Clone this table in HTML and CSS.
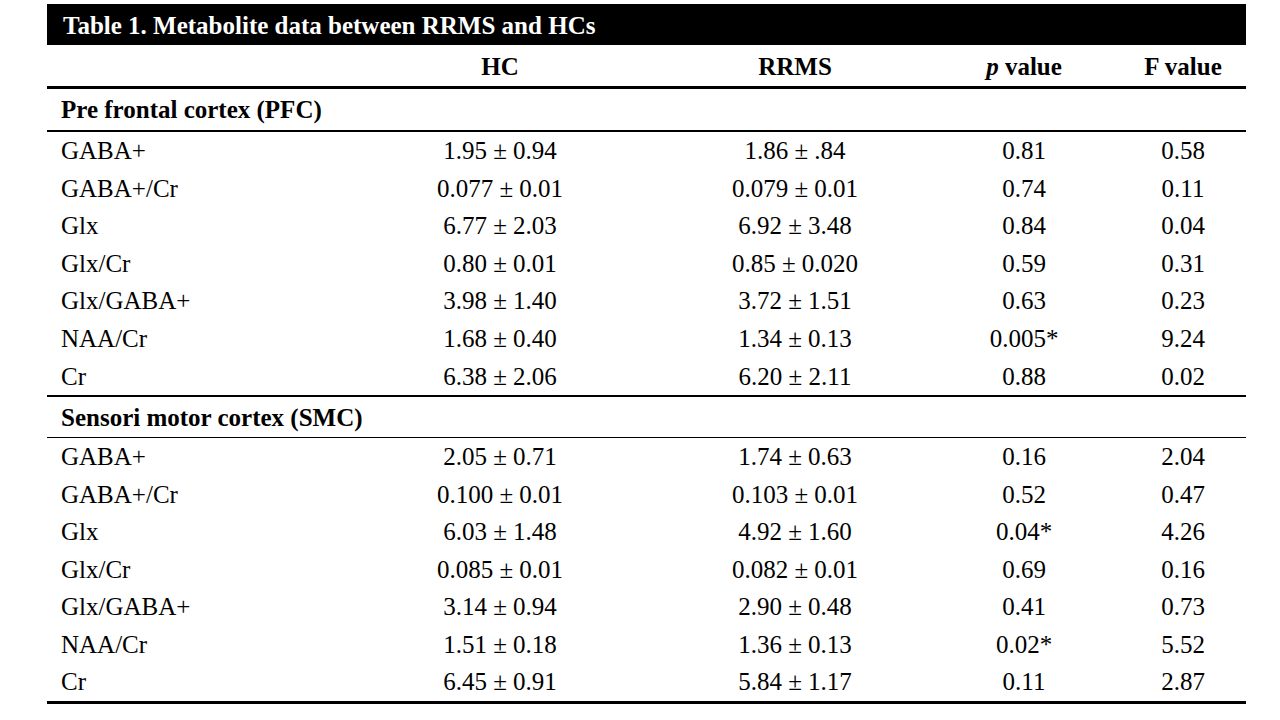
FILE: index.html
```html
<!DOCTYPE html>
<html>
<head>
<meta charset="utf-8">
<link rel="stylesheet" href="styles.css">
</head>
<body>
<div class="table">
  <div class="title">Table 1. Metabolite data between RRMS and HCs</div>
  <div class="row head">
    <div class="c label"></div>
    <div class="c">HC</div>
    <div class="c">RRMS</div>
    <div class="c"><i>p</i> value</div>
    <div class="c">F value</div>
  </div>
  <div class="section thick">Pre frontal cortex (PFC)</div>
  <div class="row"><div class="c label">GABA+</div><div class="c">1.95 ± 0.94</div><div class="c">1.86 ± .84</div><div class="c">0.81</div><div class="c">0.58</div></div>
  <div class="row"><div class="c label">GABA+/Cr</div><div class="c">0.077 ± 0.01</div><div class="c">0.079 ± 0.01</div><div class="c">0.74</div><div class="c">0.11</div></div>
  <div class="row"><div class="c label">Glx</div><div class="c">6.77 ± 2.03</div><div class="c">6.92 ± 3.48</div><div class="c">0.84</div><div class="c">0.04</div></div>
  <div class="row"><div class="c label">Glx/Cr</div><div class="c">0.80 ± 0.01</div><div class="c">0.85 ± 0.020</div><div class="c">0.59</div><div class="c">0.31</div></div>
  <div class="row"><div class="c label">Glx/GABA+</div><div class="c">3.98 ± 1.40</div><div class="c">3.72 ± 1.51</div><div class="c">0.63</div><div class="c">0.23</div></div>
  <div class="row"><div class="c label">NAA/Cr</div><div class="c">1.68 ± 0.40</div><div class="c">1.34 ± 0.13</div><div class="c">0.005*</div><div class="c">9.24</div></div>
  <div class="row last"><div class="c label">Cr</div><div class="c">6.38 ± 2.06</div><div class="c">6.20 ± 2.11</div><div class="c">0.88</div><div class="c">0.02</div></div>
  <div class="section thin">Sensori motor cortex (SMC)</div>
  <div class="row"><div class="c label">GABA+</div><div class="c">2.05 ± 0.71</div><div class="c">1.74 ± 0.63</div><div class="c">0.16</div><div class="c">2.04</div></div>
  <div class="row"><div class="c label">GABA+/Cr</div><div class="c">0.100 ± 0.01</div><div class="c">0.103 ± 0.01</div><div class="c">0.52</div><div class="c">0.47</div></div>
  <div class="row"><div class="c label">Glx</div><div class="c">6.03 ± 1.48</div><div class="c">4.92 ± 1.60</div><div class="c">0.04*</div><div class="c">4.26</div></div>
  <div class="row"><div class="c label">Glx/Cr</div><div class="c">0.085 ± 0.01</div><div class="c">0.082 ± 0.01</div><div class="c">0.69</div><div class="c">0.16</div></div>
  <div class="row"><div class="c label">Glx/GABA+</div><div class="c">3.14 ± 0.94</div><div class="c">2.90 ± 0.48</div><div class="c">0.41</div><div class="c">0.73</div></div>
  <div class="row"><div class="c label">NAA/Cr</div><div class="c">1.51 ± 0.18</div><div class="c">1.36 ± 0.13</div><div class="c">0.02*</div><div class="c">5.52</div></div>
  <div class="row end"><div class="c label">Cr</div><div class="c">6.45 ± 0.91</div><div class="c">5.84 ± 1.17</div><div class="c">0.11</div><div class="c">2.87</div></div>
</div>
</body>
</html>
```
FILE: styles.css
```css
html, body {
  margin: 0;
  padding: 0;
  background: #fff;
}
body {
  padding: 4px 0 0 47px;
  font-family: "Liberation Serif", "Times New Roman", serif;
  color: #000;
}
.table {
  width: 1199px;
}
.title {
  background: #000;
  color: #fff;
  font-weight: bold;
  font-size: 25px;
  height: 41px;
  line-height: 43px;
  padding-left: 16px;
  white-space: nowrap;
  overflow: hidden;
}
.row {
  display: grid;
  grid-template-columns: 291px 324px 266px 192px 126px;
  height: 37.5px;
  align-items: center;
  font-size: 25px;
  padding-top: 1px;
  box-sizing: border-box;
}
.c {
  text-align: center;
  white-space: nowrap;
}
.c.label {
  text-align: left;
  padding-left: 14px;
}
.row.head {
  height: 44px;
  font-weight: bold;
  border-bottom: 3px solid #000;
  padding-top: 3px;
}
.section {
  font-weight: bold;
  font-size: 25px;
  padding-left: 14px;
  display: flex;
  align-items: center;
  box-sizing: border-box;
  padding-top: 1px;
}
.section.thick {
  height: 43px;
  border-bottom: 2px solid #000;
}
.section.thin {
  height: 41px;
  border-bottom: 1px solid #000;
}
.row.last {
  border-bottom: 2px solid #000;
  height: 40px;
}
.row.end {
  border-bottom: 3px solid #000;
  height: 40.5px;
}
```
